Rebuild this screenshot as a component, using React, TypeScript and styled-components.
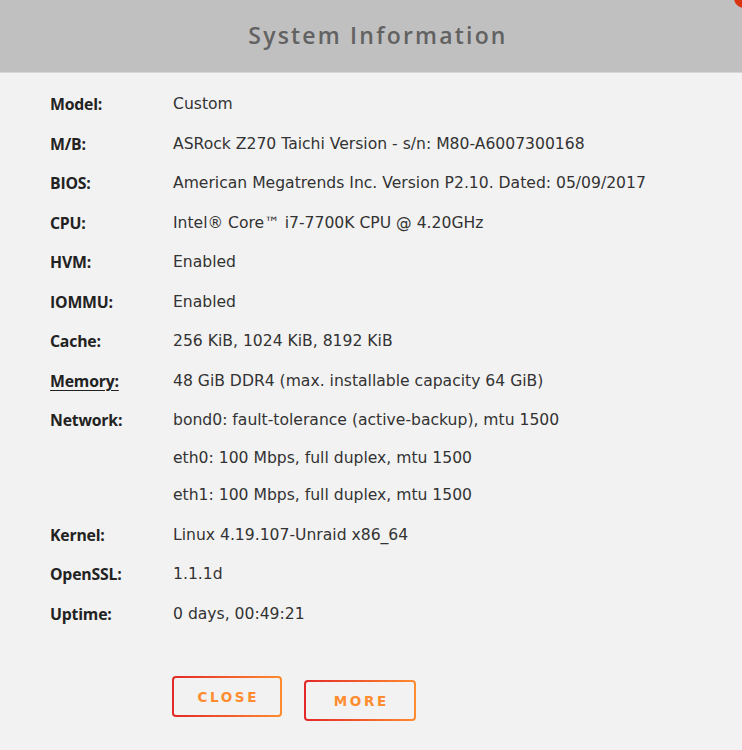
import styled, { createGlobalStyle } from 'styled-components'

const GlobalStyle = createGlobalStyle`
  html, body {
    margin: 0;
    padding: 0;
    background: #f2f2f2;
  }
  body {
    font-family: 'DejaVu Sans', 'Open Sans', sans-serif;
    color: #333;
    width: 742px;
    height: 750px;
    overflow: hidden;
  }
`

const rows = [
  { label: 'Model:', values: ['Custom'] },
  { label: 'M/B:', values: ['ASRock Z270 Taichi Version - s/n: M80-A6007300168'] },
  { label: 'BIOS:', values: ['American Megatrends Inc. Version P2.10. Dated: 05/09/2017'] },
  { label: 'CPU:', values: ['Intel® Core™ i7-7700K CPU @ 4.20GHz'] },
  { label: 'HVM:', values: ['Enabled'] },
  { label: 'IOMMU:', values: ['Enabled'] },
  { label: 'Cache:', values: ['256 KiB, 1024 KiB, 8192 KiB'] },
  { label: 'Memory:', values: ['48 GiB DDR4 (max. installable capacity 64 GiB)'], link: true },
  {
    label: 'Network:',
    values: [
      'bond0: fault-tolerance (active-backup), mtu 1500',
      'eth0: 100 Mbps, full duplex, mtu 1500',
      'eth1: 100 Mbps, full duplex, mtu 1500',
    ],
  },
  { label: 'Kernel:', values: ['Linux 4.19.107-Unraid x86_64'] },
  { label: 'OpenSSL:', values: ['1.1.1d'] },
  { label: 'Uptime:', values: ['0 days, 00:49:21'] },
]

const App = () => {
  return (
    <Dialog>
      <GlobalStyle />
      <Header>
        <h1>System Information</h1>
        <CloseDot />
      </Header>

      <Table>
        {rows.map((row) => (
          <Row key={row.label}>
            <Label $link={row.link}>{row.label}</Label>
            <Values>
              {row.values.map((v) => (
                <Value key={v}>{v}</Value>
              ))}
            </Values>
          </Row>
        ))}
      </Table>

      <Buttons>
        <OutlineButton>CLOSE</OutlineButton>
        <OutlineButton $offset>MORE</OutlineButton>
      </Buttons>
    </Dialog>
  )
}

const Dialog = styled.div`
  width: 742px;
  height: 750px;
  background: #f2f2f2;
  display: flex;
  flex-direction: column;
`

const Header = styled.div`
  position: relative;
  box-sizing: border-box;
  height: 73px;
  padding-left: 14px;
  background: #c0c0c0;
  border-bottom: 1px solid #d6d6d6;
  display: flex;
  align-items: center;
  justify-content: center;
  overflow: hidden;

  h1 {
    margin: 0 0 3px;
    font-family: 'Open Sans', sans-serif;
    font-size: 23px;
    font-weight: 600;
    letter-spacing: 2.2px;
    color: #626262;
  }
`

const CloseDot = styled.span`
  position: absolute;
  top: -12px;
  right: -12px;
  width: 20px;
  height: 20px;
  border-radius: 50%;
  background: #d9340f;
`

const Table = styled.div`
  padding: 12px 0 0 50px;
  display: flex;
  flex-direction: column;
`

const Row = styled.div`
  display: grid;
  grid-template-columns: 123px 1fr;
  align-items: start;
`

const Label = styled.span<{ $link?: boolean }>`
  height: 39.5px;
  line-height: 38px;
  font-family: 'Open Sans', sans-serif;
  font-size: 15.8px;
  font-weight: 700;
  letter-spacing: -0.2px;
  color: #222;
  overflow: hidden;
  text-decoration: ${(p) => (p.$link ? 'underline' : 'none')};
  text-underline-offset: 3px;
`

const Values = styled.div`
  display: flex;
  flex-direction: column;
`

const Value = styled.span`
  height: 37.6px;
  line-height: 39.5px;
  font-size: 15.6px;
  color: #333;

  &:only-child,
  &:last-child {
    height: 39.5px;
  }
`

const Buttons = styled.div`
  display: flex;
  align-items: flex-start;
  gap: 22px;
  padding: 42px 0 0 172px;
`

const OutlineButton = styled.button<{ $offset?: boolean }>`
  box-sizing: border-box;
  width: ${(p) => (p.$offset ? '112px' : '110px')};
  height: 41px;
  margin-top: ${(p) => (p.$offset ? '4px' : '0')};
  border: 2px solid transparent;
  border-radius: 4px;
  background:
    linear-gradient(#f2f2f2, #f2f2f2) padding-box,
    linear-gradient(90deg, #e22828, #ff8c2f) border-box;
  color: #ff8c2f;
  font-family: 'DejaVu Sans', sans-serif;
  font-size: 13.5px;
  font-weight: 700;
  letter-spacing: 2.6px;
  text-indent: 2.6px;
  cursor: pointer;
`

export default App
